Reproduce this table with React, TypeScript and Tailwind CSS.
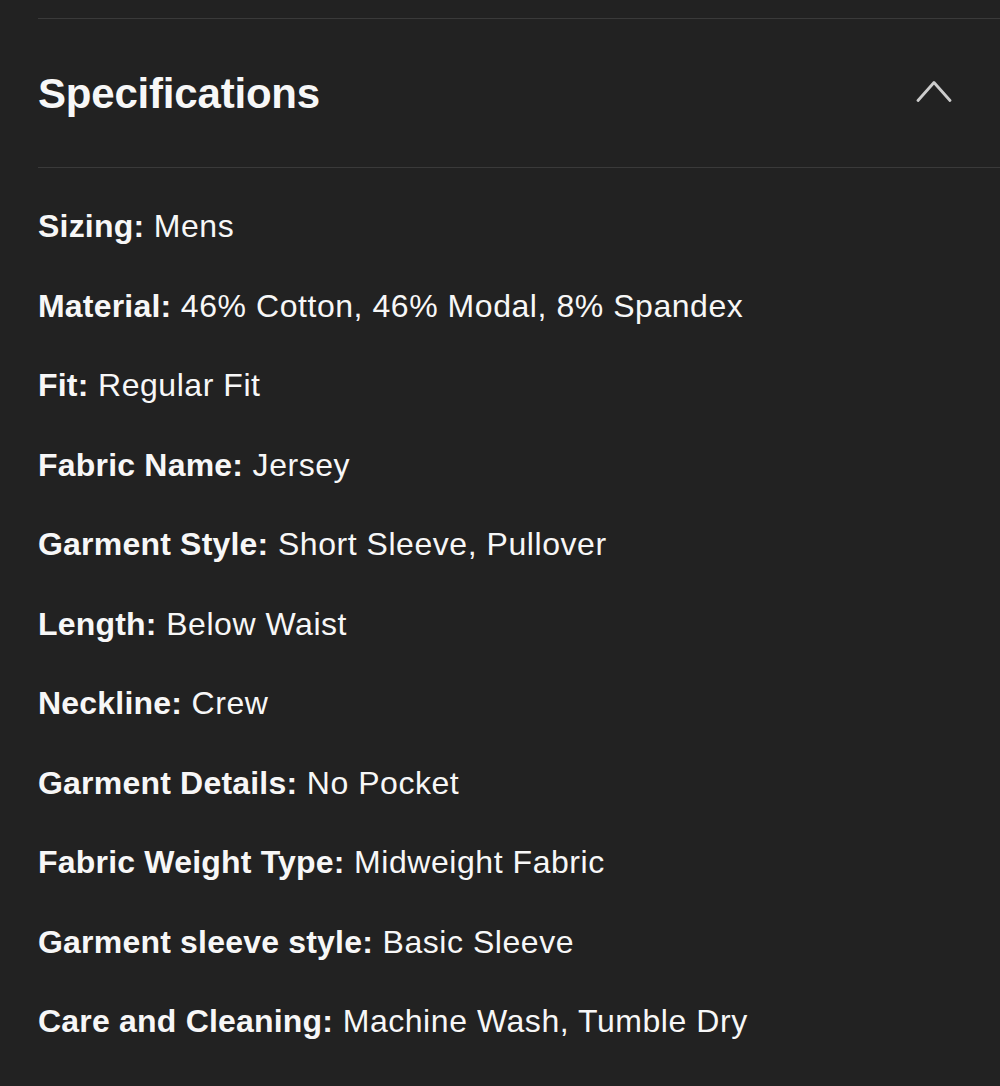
const specs: [string, string][] = [
  ['Sizing', 'Mens'],
  ['Material', '46% Cotton, 46% Modal, 8% Spandex'],
  ['Fit', 'Regular Fit'],
  ['Fabric Name', 'Jersey'],
  ['Garment Style', 'Short Sleeve, Pullover'],
  ['Length', 'Below Waist'],
  ['Neckline', 'Crew'],
  ['Garment Details', 'No Pocket'],
  ['Fabric Weight Type', 'Midweight Fabric'],
  ['Garment sleeve style', 'Basic Sleeve'],
  ['Care and Cleaning', 'Machine Wash, Tumble Dry'],
];

export default function App() {
  return (
    <div
      className="min-h-[1086px] w-[1000px] overflow-hidden bg-[#222222] text-[#f7f7f7]"
      style={{ fontFamily: '"Liberation Sans", Arial, sans-serif' }}
    >
      <div className="ml-[38px] pt-[18px]">
        {/* Header */}
        <div className="flex h-[150px] items-center justify-between border-y border-[#3a3a3a] pr-[48px]">
          <h2 className="text-[42px] font-bold tracking-[-0.2px]">Specifications</h2>
          <svg width="36" height="22" viewBox="0 0 36 22" fill="none" className="-mt-[4px]">
            <polyline
              points="2,20.5 18,2.5 34,20.5"
              stroke="#cccccc"
              strokeWidth="2.8"
              strokeLinecap="round"
              strokeLinejoin="round"
            />
          </svg>
        </div>

        {/* Spec list */}
        <ul className="pt-[19px]">
          {specs.map(([label, value]) => (
            <li key={label} className="text-[32px] leading-[79.5px] tracking-[0.55px]">
              <span className="font-bold tracking-[0.2px]">{label}:</span> {value}
            </li>
          ))}
        </ul>
      </div>
    </div>
  );
}
